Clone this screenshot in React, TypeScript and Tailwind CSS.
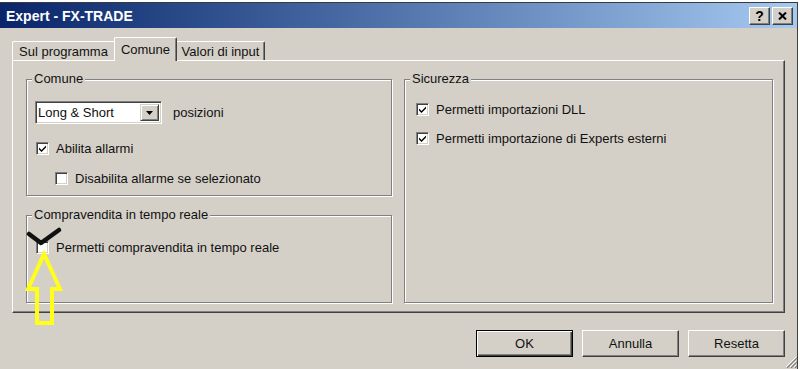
import React from "react";

function CheckBox({ checked }: { checked?: boolean }) {
  return (
    <span className="w-[13px] h-[13px] shrink-0 bg-white border border-t-[#808080] border-l-[#808080] border-b-white border-r-white shadow-[inset_1px_1px_0_#404040,inset_-1px_-1px_0_#d4d0c8] flex items-center justify-center">
      {checked && (
        <svg width="7" height="7" viewBox="0 0 7 7">
          <path d="M0 2.5 L2.5 5 L7 0.5 L7 2.5 L2.5 7 L0 4.5 Z" fill="#000" />
        </svg>
      )}
    </span>
  );
}

function CheckRow({
  checked,
  label,
  className,
}: {
  checked?: boolean;
  label: string;
  className: string;
}) {
  return (
    <div className={"flex items-center h-[15px] gap-[7px] " + className}>
      <CheckBox checked={checked} />
      <span className="leading-[15px] whitespace-nowrap">{label}</span>
    </div>
  );
}

function GroupLabel({ text }: { text: string }) {
  return (
    <span className="absolute left-[5px] top-[-9px] px-[2px] bg-[#d4d0c8] leading-[16px] whitespace-nowrap">
      {text}
    </span>
  );
}

export default function App() {
  return (
    <div className="w-[800px] h-[369px] overflow-hidden bg-white relative font-['Liberation_Sans',Arial,sans-serif] text-[13px] text-[#111]">
      <div className="h-[2px] bg-white" />
      <div className="h-[1px] w-[798px] bg-[#3a3a3a]" />
      <div className="w-[798px] h-[366px] bg-[#d4d0c8] border-r border-r-[#404040] flex flex-col">
        {/* Title bar */}
        <div className="h-[25px] bg-gradient-to-r from-[#0a246a] to-[#a6caf0] flex items-center pl-[6px] pr-[4px]">
          <span className="text-white font-bold text-[14px] leading-[16px]">Expert - FX-TRADE</span>
          <div className="ml-auto flex gap-[2px]">
            <span className="w-[21px] h-[18px] bg-[#d4d0c8] border border-t-white border-l-white border-b-[#404040] border-r-[#404040] shadow-[inset_-1px_-1px_0_#808080] flex items-center justify-center font-bold text-[14px] leading-none text-black">
              ?
            </span>
            <span className="w-[21px] h-[18px] bg-[#d4d0c8] border border-t-white border-l-white border-b-[#404040] border-r-[#404040] shadow-[inset_-1px_-1px_0_#808080] flex items-center justify-center">
              <svg width="9" height="8" viewBox="0 0 9 8">
                <path d="M1 0.5 L8 7.5 M8 0.5 L1 7.5" stroke="#000" strokeWidth="2" />
              </svg>
            </span>
          </div>
        </div>

        {/* Tabs */}
        <div className="mt-[9px] ml-[12px] h-[23px] flex items-end">
          <div className="w-[102px] h-[19px] border-t border-l border-t-white border-l-white rounded-tl-[2px] flex items-center justify-center pt-[1px] leading-[15px]">
            Sul programma
          </div>
          <div className="relative z-10 w-[63px] h-[24px] -mb-[1px] bg-[#d4d0c8] border-t border-l border-r border-t-white border-l-white border-r-[#404040] shadow-[inset_-1px_0_0_#808080] rounded-t-[2px] flex items-center justify-center pb-[1px] leading-[15px]">
            Comune
          </div>
          <div className="w-[88px] h-[19px] border-t border-r border-t-white border-r-[#404040] shadow-[inset_-1px_0_0_#808080] rounded-tr-[2px] flex items-center justify-center pt-[1px] leading-[15px]">
            Valori di input
          </div>
        </div>

        {/* Panel */}
        <div className="ml-[12px] w-[773px] h-[253px] border border-t-white border-l-white border-b-[#404040] border-r-[#404040] shadow-[inset_-1px_-1px_0_#808080] pt-[18px] pl-[13px] flex gap-[12px]">
          <div className="w-[366px] flex flex-col gap-[19px]">
            <div className="relative h-[117px] border border-[#808080] shadow-[inset_1px_1px_0_#fff,1px_1px_0_#fff] flex flex-col">
              <GroupLabel text="Comune" />
              <div className="flex items-center mt-[21px] ml-[8px]">
                <div className="w-[127px] h-[23px] bg-white border border-t-[#808080] border-l-[#808080] border-b-white border-r-white shadow-[inset_1px_1px_0_#404040,inset_-1px_-1px_0_#d4d0c8] flex items-center pl-[2px] pr-[2px]">
                  <span className="flex-1 leading-[15px] whitespace-nowrap">Long &amp; Short</span>
                  <span className="w-[19px] h-[17px] bg-[#d4d0c8] border border-t-[#d4d0c8] border-l-[#d4d0c8] border-b-[#404040] border-r-[#404040] shadow-[inset_1px_1px_0_#fff,inset_-1px_-1px_0_#808080] flex items-center justify-center">
                    <svg width="7" height="4" viewBox="0 0 7 4">
                      <path d="M0 0 H7 L3.5 4 Z" fill="#000" />
                    </svg>
                  </span>
                </div>
                <span className="ml-[11px] leading-[15px]">posizioni</span>
              </div>
              <CheckRow checked label="Abilita allarmi" className="mt-[17px] ml-[9px]" />
              <CheckRow label="Disabilita allarme se selezionato" className="mt-[15px] ml-[28px]" />
            </div>
            <div className="relative h-[88px] border border-[#808080] shadow-[inset_1px_1px_0_#fff,1px_1px_0_#fff] flex flex-col">
              <GroupLabel text="Compravendita in tempo reale" />
              <CheckRow label="Permetti compravendita in tempo reale" className="mt-[24px] ml-[9px] gap-[6px]" />
            </div>
          </div>
          <div className="relative w-[369px] h-[224px] border border-[#808080] shadow-[inset_1px_1px_0_#fff,1px_1px_0_#fff] flex flex-col">
            <GroupLabel text="Sicurezza" />
            <CheckRow checked label="Permetti importazioni DLL" className="mt-[22px] ml-[11px] gap-[6px]" />
            <CheckRow checked label="Permetti importazione di Experts esterni" className="mt-[14px] ml-[11px] gap-[6px]" />
          </div>
        </div>

        {/* Buttons */}
        <div className="ml-[12px] w-[773px] mt-[17px] flex justify-end gap-[9px]">
          <button className="w-[97px] h-[27px] bg-[#d4d0c8] border border-black shadow-[inset_1px_1px_0_#fff,inset_-1px_-1px_0_#404040,inset_-2px_-2px_0_#808080] flex items-center justify-center leading-[15px]">
            OK
          </button>
          <button className="w-[97px] h-[27px] bg-[#d4d0c8] border border-t-white border-l-white border-b-[#404040] border-r-[#404040] shadow-[inset_-1px_-1px_0_#808080] flex items-center justify-center leading-[15px]">
            Annulla
          </button>
          <button className="w-[97px] h-[27px] bg-[#d4d0c8] border border-t-white border-l-white border-b-[#404040] border-r-[#404040] shadow-[inset_-1px_-1px_0_#808080] flex items-center justify-center leading-[15px]">
            Resetta
          </button>
        </div>
      </div>

      {/* Resize grip */}
      <svg className="absolute left-[785px] top-[356px]" width="12" height="12" viewBox="0 0 12 12">
        <path d="M11 1 L1 11 M11 5 L5 11 M11 9 L9 11" stroke="#fff" strokeWidth="1" />
        <path d="M12 2 L2 12 M12 6 L6 12 M12 10 L10 12" stroke="#808080" strokeWidth="1.2" />
      </svg>

      {/* Annotations */}
      <svg className="absolute left-0 top-0 pointer-events-none" width="800" height="369" viewBox="0 0 800 369">
        <path d="M29 234 L41 243 L59 230" stroke="#111" strokeWidth="4.5" fill="none" strokeLinecap="round" strokeLinejoin="round" />
        <polygon
          points="44,254 60,289 52,289 52,323 37,323 37,289 28,289"
          fill="none"
          stroke="#ffff1a"
          strokeWidth="4"
          strokeLinejoin="miter"
        />
      </svg>
    </div>
  );
}
